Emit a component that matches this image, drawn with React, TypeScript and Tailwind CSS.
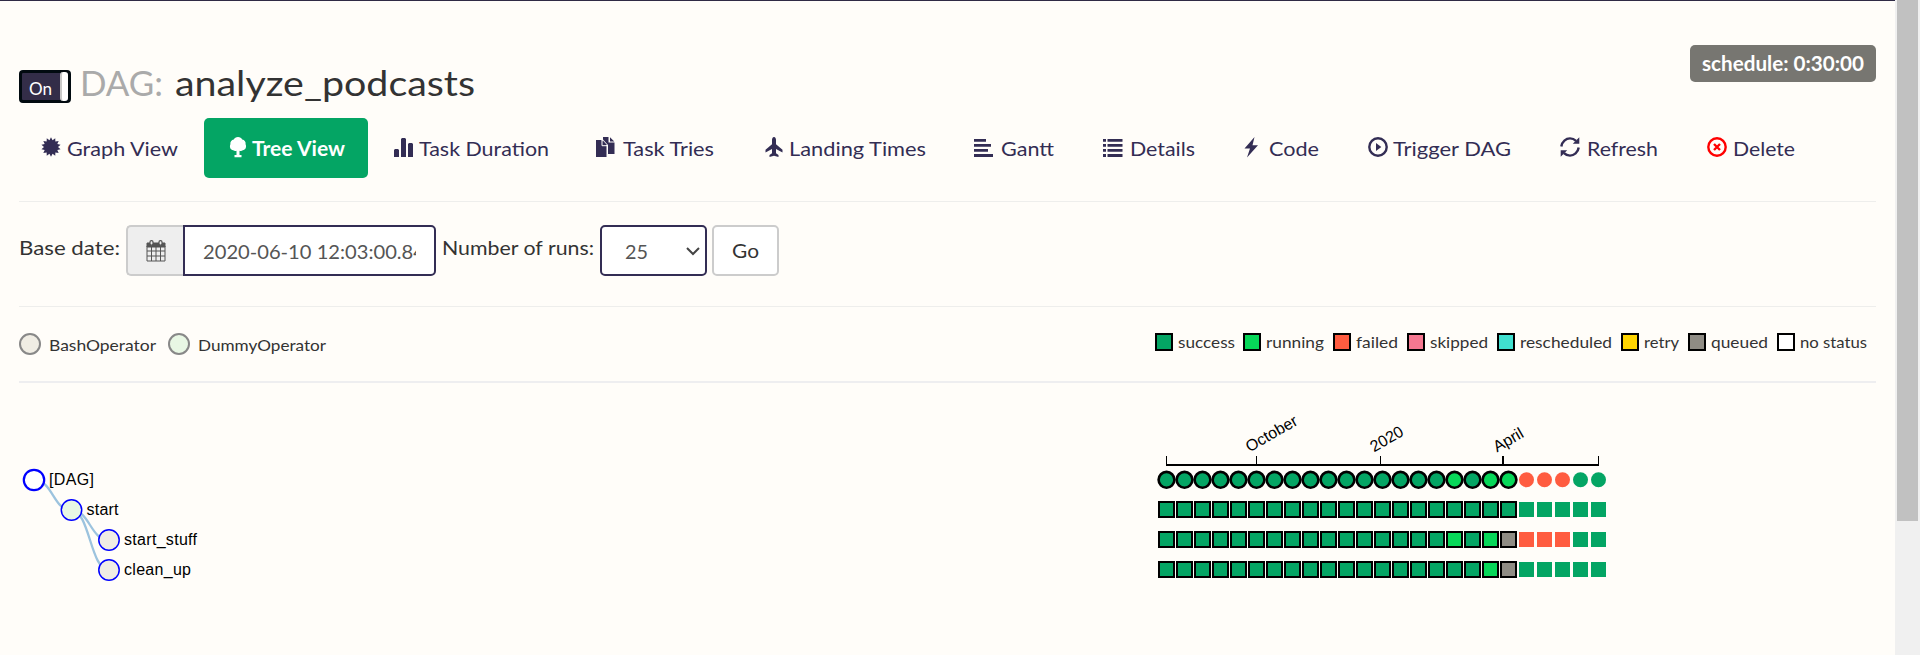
import React from "react";

const font = "font-['Lato',sans-serif]";
const P = (d: string, x = {}) => <path d={d} {...x} />;

const Icon = ({ children, className = "" }: { children: React.ReactNode; className?: string }) => (
  <svg viewBox="0 0 20 20" className={"h-5 w-5 shrink-0 overflow-visible fill-current " + className}>{children}</svg>
);

const burst = Array.from({ length: 28 }, (_, i) => {
  const r = i % 2 ? 7 : 9.8;
  const a = (i * Math.PI) / 14;
  return `${(10 + r * Math.sin(a)).toFixed(2)},${(10 - r * Math.cos(a)).toFixed(2)}`;
}).join(" ");

type Tab = { label: string; box: string; gap: string; width: number; active?: boolean; icon: React.ReactNode };

const tabs: Tab[] = [
  { label: "Graph View", box: "w-[184px] pl-[21px]", gap: "gap-[6px]", width: 111, icon: <Icon><polygon points={burst} /></Icon> },
  { label: "Tree View", box: "w-[164px] pl-6 mr-[11px] rounded-[5px] bg-[#04a564] text-white", gap: "gap-[4px]", width: 93, active: true, icon: <Icon>{P("M10 0c2 0 3.600 1 4.200 2.600C16.600 3 18 5.200 17.600 7.200 18.800 10 17.500 12.800 14.800 13.300c-1 .8-2.300.8-3.300.4V18h2V20.200h-7V18h2V13.700c-1 .5-2.300.3-3.300-.4C2.500 12.800 1.200 10 2.400 7.200 2 5.200 3.400 3 5.800 2.600 6.400 1 8 0 10 0Z")}</Icon> },
  { label: "Task Duration", box: "w-[202px] pl-[15px]", gap: "gap-[5px]", width: 130, icon: <Icon>{P("M0 20v-7l1-1h3l1 1v7zM7 20V2l1-1h3l1 1v18zM14 20V7l1-1h3l1 1v13z")}</Icon> },
  { label: "Task Tries", box: "w-[168px] pl-[15px]", gap: "gap-[7px]", width: 91, icon: <Icon>{P("M0 3h5.500l5 6v11H0zM7 0h5.500v5.500h6V17H12V8L7 2.500zM14 .3 18.300 4.500H14zM6.700 3.300 11 8H6.700z")}{P("M6 3v5.700h5", { fill: "none", stroke: "#fffdf9", strokeWidth: 1 })}</Icon> },
  { label: "Landing Times", box: "w-[210px] pl-[15px]", gap: "gap-[5px]", width: 137, icon: <Icon>{P("M10 0c1.400 0 2 1.500 2 3v4.200l6.500 5.500V15.500L12 12v4.200l2.500 1.800v2L10 18.700 5.500 20v-2L8 16.200V12l-6.500 3.500V12.700L8 7.200V3c0-1.500.6-3 2-3Z")}</Icon> },
  { label: "Gantt", box: "w-[129px] pl-[15px]", gap: "gap-[7px]", width: 53, icon: <Icon>{P("M0 2h12V4.800H0zM0 7h17V9.800H0zM0 12h14V14.800H0zM0 17h19V20H0z")}</Icon> },
  { label: "Details", box: "w-[139px] pl-[15px]", gap: "gap-[7px]", width: 65, icon: <Icon>{P("M0 2h3V4.800H0zM4.500 2H19.500V4.800H4.500zM0 7h3V9.800H0zM4.500 7H19.500V9.800H4.500zM0 12h3V14.800H0zM4.500 12H19.500V14.800H4.500zM0 17h3V20H0zM4.500 17H19.500V20H4.500z")}</Icon> },
  { label: "Code", box: "w-[126px] pl-[15px]", gap: "gap-[7px]", width: 50, icon: <Icon>{P("M12.500 0 2.500 11.500h5.500L5 20.500 16 8.300H10.500z")}</Icon> },
  { label: "Trigger DAG", box: "w-[192px] pl-[15px]", gap: "gap-[5px]", width: 118, icon: <Icon><circle cx="10" cy="10" r="8.700" fill="none" stroke="currentColor" strokeWidth="2.400" />{P("M8 6v8l5.300-4z")}</Icon> },
  { label: "Refresh", box: "w-[147px] pl-[15px]", gap: "gap-[7px]", width: 71, icon: <Icon>{P("M1.300 9.500C2 4.500 6 1.400 10 1.400c2.500 0 4.500 1 6 2.500M18.700 10.500C18 15.500 14 18.600 10 18.600c-2.500 0-4.500-1-6-2.500", { fill: "none", stroke: "currentColor", strokeWidth: 2.4 })}{P("M19.300.3v6.500H12.800zM.7 19.700v-6.500h6.500z")}</Icon> },
  { label: "Delete", box: "w-[130px] pl-[15px]", gap: "gap-[6px]", width: 62, icon: <Icon className="text-[#f00]"><circle cx="10" cy="10" r="8.700" fill="none" stroke="currentColor" strokeWidth="2.400" />{P("M7 7l6 6M13 7l-6 6", { stroke: "currentColor", strokeWidth: 2.4 })}</Icon> },
];

/* Text set to an exact advance width, independent of the fallback face. */
const Fit = ({ w, size, children, weight = 400, h = 30 }: { w: number; size: number; children: string; weight?: number; h?: number }) => (
  <svg width={w} height={h} className="shrink-0 overflow-visible fill-current">
    <text x="0" y={Math.round(h * 0.72)} textLength={w} lengthAdjust="spacingAndGlyphs" fontSize={size} fontWeight={weight}>{children}</text>
  </svg>
);

const legend: [string, string, string, number][] = [
  ["success", "bg-[#04a564]", "w-[88px]", 57], ["running", "bg-[#07d859]", "w-[90px]", 58],
  ["failed", "bg-[#ff5c40]", "w-[74px]", 42], ["skipped", "bg-[#f67891]", "w-[90px]", 58],
  ["rescheduled", "bg-[#40e0d0]", "w-[124px]", 92], ["retry", "bg-[#ffd500]", "w-[67px]", 35],
  ["queued", "bg-[#8f8c84]", "w-[89px]", 57], ["no status", "bg-white", "w-[99px]", 67],
];

const colour: Record<string, string> = { g: "#04a564", l: "#07d859", r: "#ff5c40", q: "#8f8c84" };
const rows = [
  "gggggggggggggggglgllrrrgg",
  "ggggggggggggggggggggggggg",
  "gggggggggggggggglglqrrrgg",
  "gggggggggggggggggglqggggg",
];

const nodes: [number, number, string, string, number][] = [
  [34, 480, "#fff", "[DAG]", 45],
  [71.5, 510, "#e8f7e4", "start", 32],
  [109, 540, "#f0ede4", "start_stuff", 73],
  [109, 570, "#f0ede4", "clean_up", 67],
];

const months: [number, string][] = [[1249.5, "October"], [1374, "2020"], [1497, "April"]];

export default function App() {
  return (
    <div className={`flex h-[655px] w-[1920px] overflow-hidden bg-[#fffdf9] text-[#333] ${font}`}>
      <div className="flex w-[1895px] flex-col border-t border-[#2f2a45] px-[19px]">
        <header className="flex h-[116px] shrink-0 items-start justify-between">
          <div className="flex items-start pt-[62px]">
            <div className="mt-[7px] flex h-[33px] w-[52px] rounded-[4px] border-[3px] border-[#010a10] bg-[#332d48] text-white">
              <div className="pl-[7px] pt-[9px]"><Fit w={23} size={17} h={18}>On</Fit></div>
              <div className="-mt-px ml-auto h-[29px] w-[8px] rounded-[3px] border-l-2 border-[#c8c8c8] bg-white" />
            </div>
            <h1 className="ml-[9px] mt-px flex gap-[12px] text-[#aaa]"><Fit w={83} size={35} h={44}>DAG:</Fit><span className="text-[#333]"><Fit w={300} size={35} h={44}>analyze_podcasts</Fit></span></h1>
          </div>
          <div className="mt-11 flex h-[37px] w-[186px] items-center justify-center rounded-[5px] bg-[#777671] pt-[3px] text-white"><Fit w={162} size={20} weight={700} h={28}>schedule: 0:30:00</Fit></div>
        </header>
        <nav className="ml-px flex h-[62px] shrink-0 text-[#332d54]">
          {tabs.map((t) => (
            <a key={t.label} className={`mt-px flex h-[60px] shrink-0 ${t.box}`}>
              <span className={`mt-[19px] flex ${t.gap}`}>{t.icon}<span className="-mt-[3px]"><Fit w={t.width} size={20} weight={t.active ? 700 : 400}>{t.label}</Fit></span></span>
            </a>
          ))}
        </nav>
        <div className="mt-[22px] border-t border-[#eeeeec]" />
        <form className="flex h-[104px] shrink-0 pt-[23px]">
          <span className="mt-[8px]"><Fit w={101} size={20}>Base date:</Fit></span>
          <span className="ml-[6px] flex h-[51px] w-[57px] items-center justify-center rounded-l-[5px] border-2 border-r-0 border-[#ccc] bg-[#eee] text-[#555]">
            <svg viewBox="0 0 20 22" className="h-[22px] w-5 fill-none stroke-current"><path d="M1 6h18v15H1zM1 11h18M1 16h18M5.500 6v15M10 6v15M14.500 6v15" strokeWidth="1" /><path d="M1 3h18v4H1z" fill="currentColor" /><rect x="4" y=".7" width="3" height="4.500" rx="1.400" fill="#eee" strokeWidth="1.200" /><rect x="13" y=".7" width="3" height="4.500" rx="1.400" fill="#eee" strokeWidth="1.200" /></svg>
          </span>
          <span className="h-[51px] w-[253px] rounded-r-[5px] border-2 border-[#332d54] bg-white pl-[18px] pt-[10px] text-[#555]"><span className="block w-[213px] overflow-hidden"><Fit w={222} size={20}>2020-06-10 12:03:00.84</Fit></span></span>
          <span className="ml-[6px] mt-[8px]"><Fit w={152} size={20}>Number of runs:</Fit></span>
          <span className="ml-[6px] flex h-[51px] w-[107px] rounded-[5px] border-2 border-[#332d54] bg-white pl-[23px] pt-[10px] text-[#555]"><Fit w={23} size={20}>25</Fit><svg viewBox="0 0 14 9" className="ml-auto mr-[5px] mt-[10px] h-[9px] w-[14px] fill-none stroke-[#444]"><path d="M1 1l6 6 6-6" strokeWidth="2" /></svg></span>
          <span className="ml-[5px] flex h-[51px] w-[67px] rounded-[5px] border-2 border-[#ccc] bg-white pl-[18px] pt-[9px]"><Fit w={27} size={20}>Go</Fit></span>
        </form>
        <div className="border-t border-[#eeeeec]" />
        <div className="flex h-[74px] shrink-0 justify-between">
          <div className="flex pt-[26px]">
            <i className="mr-2 h-[22px] w-[22px] rounded-full border-2 border-[#888] bg-[#f0ede4]" /><span className="mt-px"><Fit w={107} size={16} h={24}>BashOperator</Fit></span>
            <i className="ml-[12px] mr-2 h-[22px] w-[22px] rounded-full border-2 border-[#888] bg-[#e8f7e4]" /><span className="mt-px"><Fit w={128} size={16} h={24}>DummyOperator</Fit></span>
          </div>
          <div className="flex pt-[26px]">
            {legend.map(([name, bg, w, tw]) => (
              <span key={name} className={`flex shrink-0 gap-[5px] ${w}`}><i className={`h-[18px] w-[18px] border-2 border-black ${bg}`} /><span className="-mt-px"><Fit w={tw} size={16} h={22}>{name}</Fit></span></span>
            ))}
          </div>
        </div>
        <div className="border-t-2 border-[#eeeef0]" />
        <svg width="1857" height="270" viewBox="19 383 1857 270" className="shrink-0 font-['Liberation_Sans',sans-serif] text-[16px]">
          <path d="M34 480C53 480 53 510 71 510M71 510C90 510 90 540 109 540M71 510C90 510 90 570 109 570" fill="none" stroke="#9cc3de" strokeWidth="2.300" />
          {nodes.map(([x, y, f, t, w], i) => (
            <g key={t}><circle cx={x} cy={y} r="10.200" fill={f} stroke="#00f" strokeWidth={i ? 1.5 : 2.2} /><text x={x + 15} y={y + 5} textLength={w}>{t}</text></g>
          ))}
          <path d="M1166 465H1599" stroke="#000" strokeWidth="2" />
          <path d="M1166.500 456v9M1256.500 456v9M1380.500 456v9M1598.500 456v9" stroke="#000" strokeWidth="1" />
          <path d="M1503 456v9" stroke="#000" strokeWidth="2" />
          {months.map(([x, t]) => <text key={t} transform={`translate(${x} 452.500) rotate(-30)`}>{t}</text>)}
          {rows.map((row, r) => [...row].map((c, i) => r === 0
            ? <circle key={`${r}-${i}`} cx={1166.5 + i * 18} cy="479.800" r={i < 20 ? 7.9 : 7.5} fill={colour[c]} stroke="#000" strokeWidth={i < 20 ? 2.6 : 0} />
            : <rect key={`${r}-${i}`} x={1159 + i * 18} y={472 + r * 30} width="15" height="15" fill={colour[c]} stroke="#000" strokeWidth={i < 20 ? 1.7 : 0} shapeRendering="crispEdges" />))}
        </svg>
      </div>
      <aside className="w-[25px] bg-[#f0f0f0] px-[2px]"><div className="h-[521px] bg-[#c1c1c1]" /></aside>
    </div>
  );
}
